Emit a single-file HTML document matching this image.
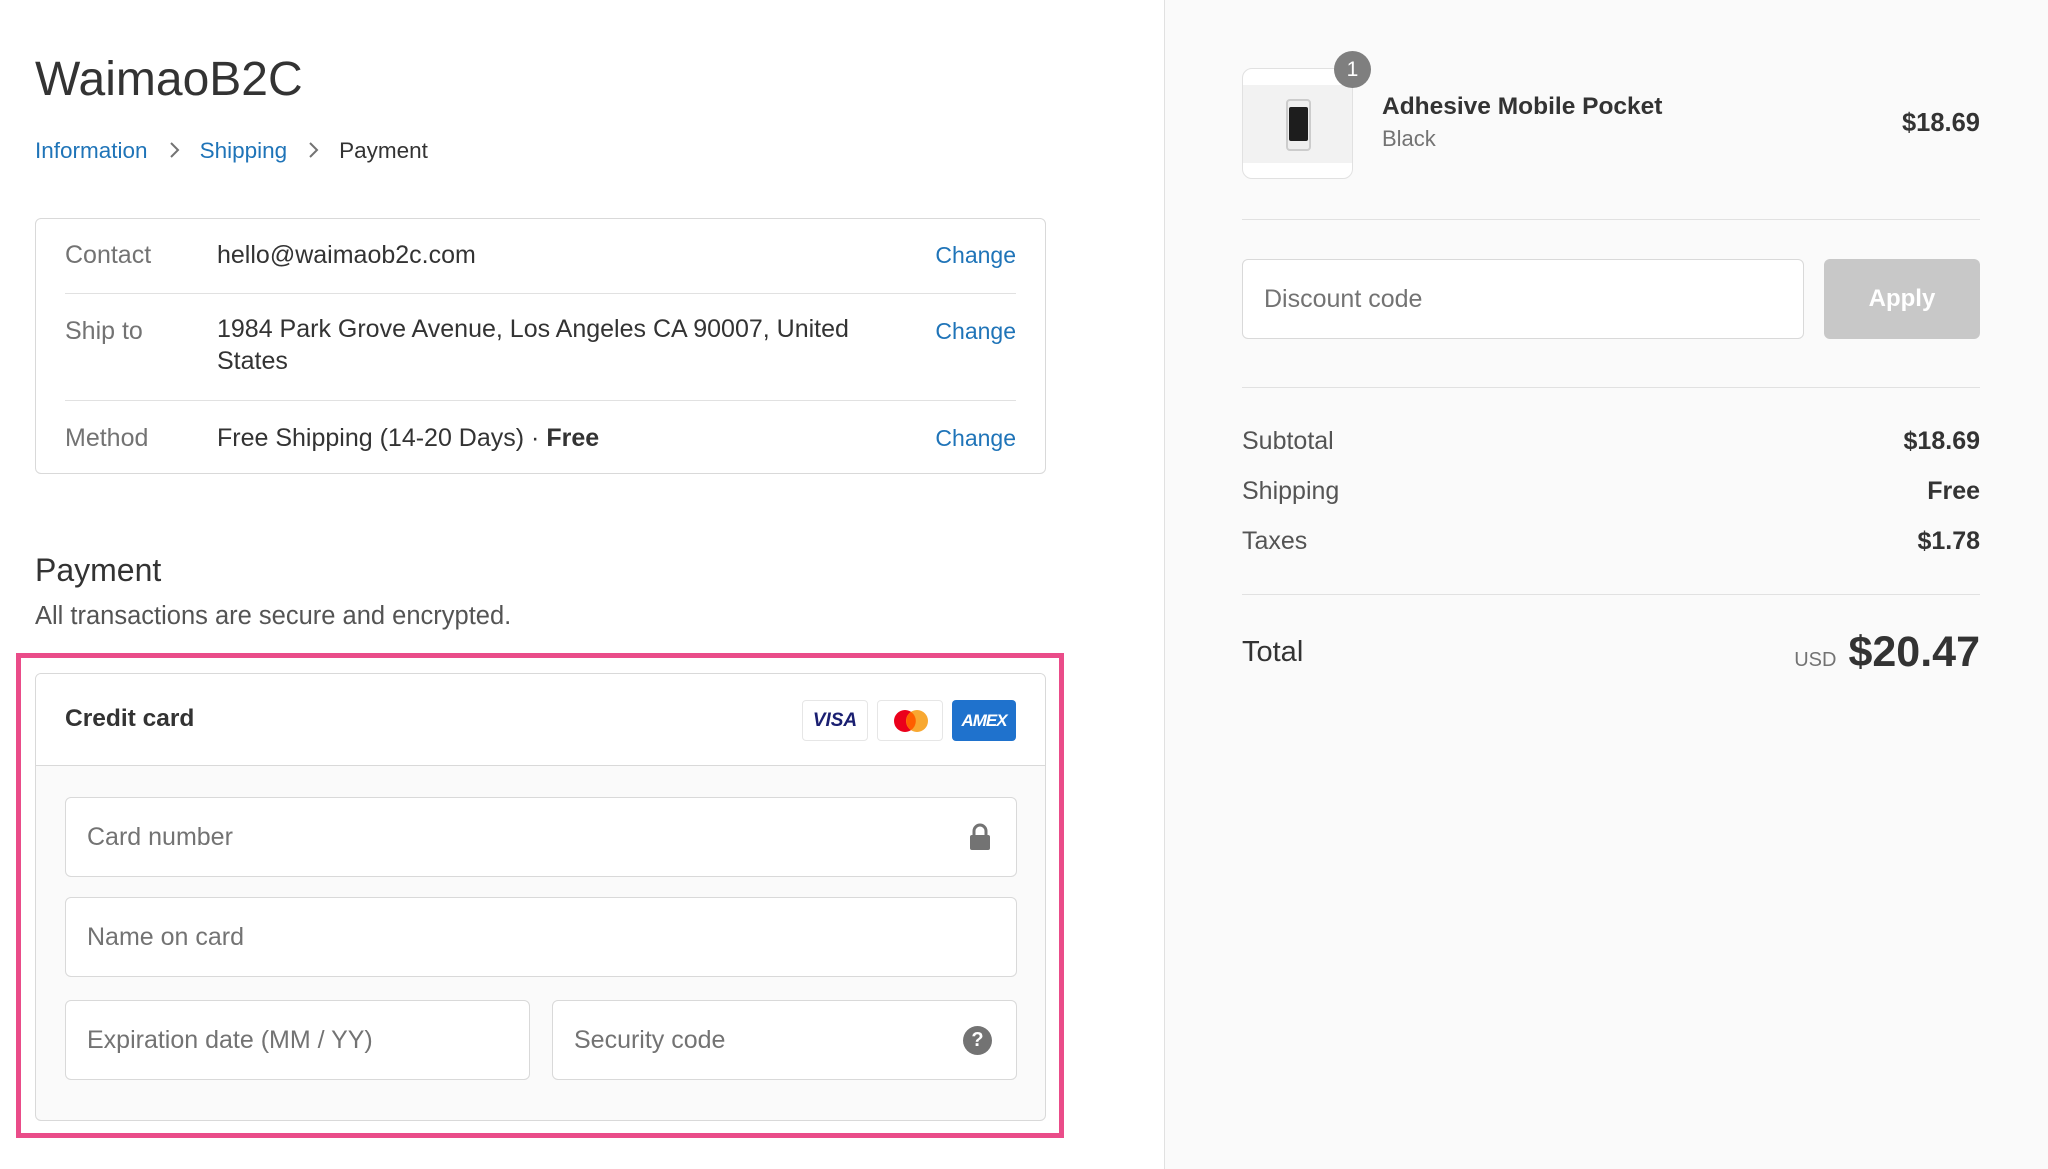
<!DOCTYPE html>
<html><head><meta charset="utf-8">
<style>
*{box-sizing:border-box;margin:0;padding:0}
body{width:2048px;height:1169px;overflow:hidden;background:#fff;font-family:"Liberation Sans",Helvetica,Arial,sans-serif;color:#333;position:relative}
.abs{position:absolute}
.right{position:absolute;left:1164px;top:0;width:884px;height:1169px;background:#fafafa;border-left:1px solid #e1e1e1}
.link{color:#1f74b8}
.lab{color:#737373;font-size:25px}
.val{color:#333;font-size:25px}
.ch{color:#1f74b8;font-size:23px;right:0;text-align:right}
.field{position:absolute;border:1px solid #d9d9d9;border-radius:6px;background:#fff;font-size:25px;color:#737373;padding-left:21px;display:flex;align-items:center}
.hr{position:absolute;height:1px;background:#e1e1e1}
.chev{display:inline-block;margin:0 20px;vertical-align:-2px}
</style></head><body>
<div class="abs" style="left:35px;top:52px;font-size:48px;color:#333">WaimaoB2C</div>
<div class="abs" style="left:35px;top:138px;font-size:22.5px">
<span class="link">Information</span><svg class="chev" width="12" height="20" viewBox="0 0 12 20"><path d="M3 3l7 7-7 7" fill="none" stroke="#737373" stroke-width="2"/></svg><span class="link">Shipping</span><svg class="chev" width="12" height="20" viewBox="0 0 12 20"><path d="M3 3l7 7-7 7" fill="none" stroke="#737373" stroke-width="2"/></svg><span style="color:#333">Payment</span></div>

<div class="abs" style="left:35px;top:218px;width:1011px;height:256px;border:1px solid #d9d9d9;border-radius:6px">
 <div class="abs lab" style="left:29px;top:22px">Contact</div>
 <div class="abs val" style="left:181px;top:22px">hello@waimaob2c.com</div>
 <div class="abs ch" style="right:29px;top:23px">Change</div>
 <div class="hr" style="left:29px;right:29px;top:74px"></div>
 <div class="abs lab" style="left:29px;top:98px">Ship to</div>
 <div class="abs val" style="left:181px;top:94px;width:650px;line-height:32px">1984 Park Grove Avenue, Los Angeles CA 90007, United States</div>
 <div class="abs ch" style="right:29px;top:99px">Change</div>
 <div class="hr" style="left:29px;right:29px;top:181px"></div>
 <div class="abs lab" style="left:29px;top:205px">Method</div>
 <div class="abs val" style="left:181px;top:205px">Free Shipping (14-20 Days) · <b style="font-weight:600">Free</b></div>
 <div class="abs ch" style="right:29px;top:206px">Change</div>
</div>

<div class="abs" style="left:35px;top:552px;font-size:32px;color:#333">Payment</div>
<div class="abs" style="left:35px;top:602px;font-size:25.5px;color:#545454">All transactions are secure and encrypted.</div>

<div class="abs" style="left:16px;top:653px;width:1048px;height:485px;border:5px solid #ea4c89"></div>
<div class="abs" style="left:35px;top:673px;width:1011px;height:448px;border:1px solid #d9d9d9;border-radius:6px;background:#fafafa;overflow:hidden">
 <div class="abs" style="left:0;top:0;width:100%;height:92px;background:#fff;border-bottom:1px solid #d9d9d9"></div>
 <div class="abs" style="left:29px;top:31px;font-size:24.5px;font-weight:bold;color:#333">Credit card</div>
 <div class="abs" style="left:766px;top:26px;width:66px;height:41px;border:1px solid #e6e6e6;border-radius:4px;background:#fff;text-align:center;line-height:40px;font-weight:bold;font-style:italic;color:#1a1f71;font-size:19px">VISA</div>
 <div class="abs" style="left:841px;top:26px;width:66px;height:41px;border:1px solid #e6e6e6;border-radius:4px;background:#fff">
  <svg width="66" height="41"><circle cx="27" cy="20" r="11" fill="#eb001b"/><circle cx="39" cy="20" r="11" fill="#f79e1b" opacity=".9"/><path d="M33 11a11 11 0 0 1 0 18a11 11 0 0 1 0-18z" fill="#ff5f00"/></svg></div>
 <div class="abs" style="left:916px;top:26px;width:64px;height:41px;border-radius:4px;background:#1f72cd;text-align:center;line-height:41px;font-weight:bold;font-style:italic;color:#fff;font-size:17px;letter-spacing:-1px">AMEX</div>
 <div class="field" style="left:29px;top:123px;width:952px;height:80px">Card number
  <svg class="abs" style="right:24px;top:25px" width="24" height="28" viewBox="0 0 24 28"><path d="M6 12V8a6 6 0 0 1 12 0v4" fill="none" stroke="#737373" stroke-width="3"/><rect x="2" y="12" width="20" height="15" rx="2" fill="#737373"/></svg></div>
 <div class="field" style="left:29px;top:223px;width:952px;height:80px">Name on card</div>
 <div class="field" style="left:29px;top:326px;width:465px;height:80px">Expiration date (MM / YY)</div>
 <div class="field" style="left:516px;top:326px;width:465px;height:80px">Security code
  <div class="abs" style="right:24px;top:25px;width:29px;height:29px;border-radius:50%;background:#737373;color:#fff;font-weight:bold;font-size:20px;text-align:center;line-height:29px">?</div></div>
</div>

<div class="right"></div>
<div class="abs" style="left:1242px;top:68px;width:111px;height:111px;border:1px solid #e1e1e1;border-radius:10px;background:#fff;overflow:hidden">
 <div class="abs" style="left:0;top:16px;width:100%;height:78px;background:#f2f2f2"></div>
 <div class="abs" style="left:43px;top:30px;width:25px;height:52px;border:2px solid #ccc;border-radius:4px;background:#eee"></div>
 <div class="abs" style="left:46px;top:38px;width:19px;height:34px;background:#1d1d1d;border-radius:2px"></div>
</div>
<div class="abs" style="left:1334px;top:51px;width:37px;height:37px;border-radius:50%;background:#7f7f7f;color:#fff;font-size:21px;text-align:center;line-height:37px">1</div>
<div class="abs" style="left:1382px;top:93px;font-size:24.5px;font-weight:bold;color:#333">Adhesive Mobile Pocket</div>
<div class="abs" style="left:1382px;top:126px;font-size:22px;color:#737373">Black</div>
<div class="abs" style="right:68px;top:109px;font-size:25.5px;font-weight:bold;color:#333">$18.69</div>
<div class="hr" style="left:1242px;width:738px;top:219px"></div>
<div class="field" style="left:1242px;top:259px;width:562px;height:80px;border-radius:6px">Discount code</div>
<div class="abs" style="left:1824px;top:259px;width:156px;height:80px;border-radius:6px;background:#c8c8c8;color:#fff;font-size:24px;font-weight:bold;text-align:center;line-height:80px">Apply</div>
<div class="hr" style="left:1242px;width:738px;top:387px"></div>
<div class="abs" style="left:1242px;top:427px;font-size:25px;color:#545454">Subtotal</div>
<div class="abs" style="right:68px;top:427px;font-size:25px;font-weight:bold;color:#333">$18.69</div>
<div class="abs" style="left:1242px;top:477px;font-size:25px;color:#545454">Shipping</div>
<div class="abs" style="right:68px;top:477px;font-size:25px;font-weight:bold;color:#333">Free</div>
<div class="abs" style="left:1242px;top:527px;font-size:25px;color:#545454">Taxes</div>
<div class="abs" style="right:68px;top:527px;font-size:25px;font-weight:bold;color:#333">$1.78</div>
<div class="hr" style="left:1242px;width:738px;top:594px"></div>
<div class="abs" style="left:1242px;top:636px;font-size:29px;color:#333">Total</div>
<div class="abs" style="right:68px;top:628px;color:#333;white-space:nowrap"><span style="font-size:20px;color:#737373;margin-right:12px">USD</span><span style="font-size:43px;font-weight:bold">$20.47</span></div>
</body></html>
